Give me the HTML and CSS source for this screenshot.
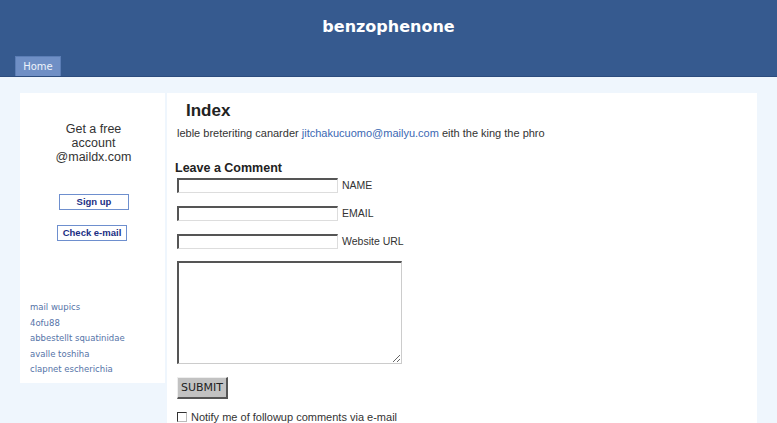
FILE: index.html
```html
<!DOCTYPE html>
<html>
<head>
<meta charset="utf-8">
<link rel="stylesheet" href="styles.css">
</head>
<body>
<header class="header">
  <h1 class="site-title">benzophenone</h1>
  <nav class="nav"><a class="tab" href="#">Home</a></nav>
</header>
<div class="wrap">
  <aside class="sidebar">
    <p class="promo">Get a free<br>account<br>@maildx.com</p>
    <a class="btn btn-signup" href="#">Sign up</a>
    <a class="btn btn-check" href="#">Check e-mail</a>
    <ul class="links">
      <li><a href="#">mail wupics</a></li>
      <li><a href="#">4ofu88</a></li>
      <li><a href="#">abbestellt squatinidae</a></li>
      <li><a href="#">avalle toshiha</a></li>
      <li><a href="#">clapnet escherichia</a></li>
    </ul>
  </aside>
  <main class="main">
    <h2 class="page-title">Index</h2>
    <p class="intro">leble breteriting canarder <a href="#">jitchakucuomo@mailyu.com</a> eith the king the phro</p>
    <h3 class="comment-title">Leave a Comment</h3>
    <form class="form">
      <div class="row"><input class="field" type="text"><span class="label">NAME</span></div>
      <div class="row"><input class="field" type="text"><span class="label">EMAIL</span></div>
      <div class="row"><input class="field" type="text"><span class="label">Website URL</span></div>
      <textarea class="message"></textarea>
      <div><button class="submit" type="button">SUBMIT</button></div>
      <label class="notify"><span class="check"></span>Notify me of followup comments via e-mail</label>
    </form>
  </main>
</div>
</body>
</html>
```
FILE: styles.css
```css
html, body { margin: 0; padding: 0; }
body {
  background: #eff6fd;
  font-family: "Liberation Sans", Arial, sans-serif;
  color: #333;
  overflow: hidden;
  height: 423px;
}
.header {
  background: #365a8f;
  height: 76px;
  border-bottom: 1px solid #2c4c7e;
  display: flex;
  flex-direction: column;
}
.site-title {
  margin: 0;
  padding-top: 15px;
  height: 42px;
  text-align: center;
  color: #fff;
  font-family: "DejaVu Sans", Verdana, sans-serif;
  font-weight: bold;
  font-size: 16px;
  line-height: 24px;
}
.nav {
  padding-left: 15px;
  display: flex;
  align-items: flex-end;
  flex: 1;
}
.tab {
  display: block;
  width: 44px;
  height: 19px;
  background: #6f8fc5;
  border: 1px solid #5b7db5;
  border-bottom: none;
  color: #eef3fb;
  font-family: "DejaVu Sans", Verdana, sans-serif;
  font-size: 10px;
  line-height: 19px;
  text-align: center;
  text-decoration: none;
}
.wrap {
  display: flex;
  align-items: flex-start;
  gap: 2px;
  padding: 16px 20px 0 20px;
}
.sidebar {
  width: 145px;
  height: 290px;
  background: #fff;
  display: flex;
  flex-direction: column;
  align-items: center;
}
.promo {
  margin: 29px 0 0 2px;
  font-size: 12.5px;
  line-height: 14px;
  text-align: center;
  color: #333;
}
.btn {
  display: block;
  box-sizing: border-box;
  width: 70px;
  height: 16px;
  border: 1px solid #6e8fce;
  color: #1b2f84;
  font-size: 9.5px;
  font-weight: bold;
  line-height: 14px;
  text-align: center;
  text-decoration: none;
}
.btn-signup { margin-top: 30px; margin-left: 3px; }
.btn-check { margin-top: 15px; margin-left: -1px; }
.links {
  list-style: none;
  margin: 56px 0 0 0;
  padding: 0 0 0 10px;
  align-self: stretch;
}
.links li {
  height: 15.5px;
  line-height: 15.5px;
}
.links a {
  color: #5574a8;
  font-family: "DejaVu Sans", Verdana, sans-serif;
  font-size: 8.5px;
  text-decoration: none;
}
.main {
  flex: 1;
  background: #fff;
  height: 340px;
  padding-left: 8px;
}
.page-title {
  margin: 7px 0 0 11px;
  font-size: 17px;
  line-height: 22px;
  font-weight: bold;
  color: #222;
}
.intro {
  margin: 4px 0 0 2px;
  font-size: 11px;
  line-height: 14px;
  color: #333;
}
.intro a { color: #3b68b3; text-decoration: none; }
.comment-title {
  margin: 21px 0 0 0;
  font-size: 12.5px;
  line-height: 14px;
  font-weight: bold;
  color: #222;
}
.form { margin: 2px 0 0 2px; }
.row {
  display: flex;
  align-items: center;
  height: 16px;
  margin-bottom: 12px;
}
.field {
  box-sizing: border-box;
  width: 161px;
  height: 15px;
  margin: 0;
  padding: 0;
  border-style: solid;
  border-width: 2px 1px 1px 2px;
  border-color: #555 #ddd #ddd #555;
  background: #fff;
}
.label {
  margin-left: 4px;
  font-size: 10.5px;
  color: #333;
}
.message {
  display: block;
  box-sizing: border-box;
  width: 225px;
  height: 103px;
  margin: 0;
  padding: 0;
  border-style: solid;
  border-width: 2px 1px 1px 2px;
  border-color: #555 #ccc #ccc #555;
  resize: both;
}
.submit {
  margin-top: 13px;
  box-sizing: border-box;
  width: 51px;
  height: 22px;
  padding: 0;
  background: #c2c2c2;
  border-style: solid;
  border-width: 1px 2px 2px 1px;
  border-color: #eee #555 #555 #eee;
  font-family: "DejaVu Sans", Verdana, sans-serif;
  font-size: 11px;
  color: #222;
}
.notify {
  display: flex;
  align-items: center;
  margin-top: 12px;
  font-size: 11px;
  color: #333;
}
.check {
  box-sizing: border-box;
  width: 10px;
  height: 10px;
  border-style: solid;
  border-width: 1px 1px 1px 1px;
  border-color: #333 #bbb #bbb #333;
  margin-right: 4px;
}
```
